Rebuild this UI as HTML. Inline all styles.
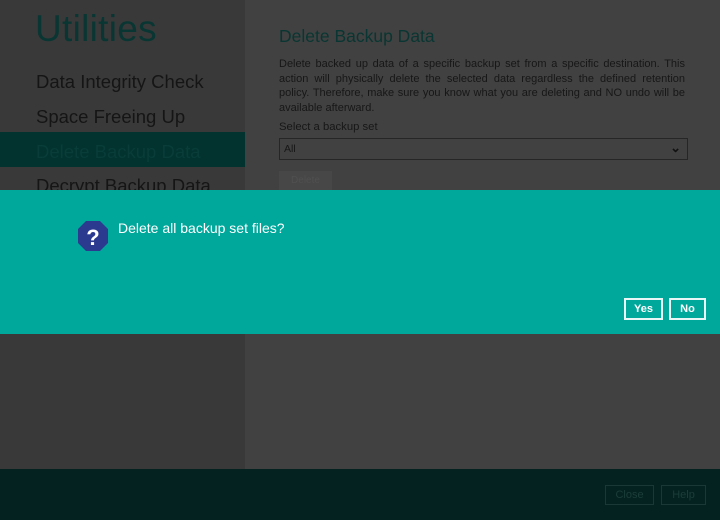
<!DOCTYPE html>
<html><head><style>
*{margin:0;padding:0;box-sizing:border-box}
body{width:720px;height:520px;overflow:hidden;background:#414141;font-family:"Liberation Sans",sans-serif;position:relative}
.side{position:absolute;left:0;top:0;width:245px;height:469px;background:#393939}
.t{position:absolute;left:35px;top:8px;font-size:37px;color:#093632;letter-spacing:0.3px}
.it{position:absolute;left:36px;font-size:18.5px;color:#151515}
.sel{position:absolute;left:0;top:132px;width:245px;height:35px;background:#02332f}
.main{position:absolute;left:279px}
.foot{position:absolute;left:0;top:469px;width:720px;height:51px;background:#032220}
.fb{position:absolute;top:485px;height:20px;border:1px solid #1a3835;color:#1c3e3b;font-size:11px;text-align:center;line-height:18px}
.dlg{position:absolute;left:0;top:190px;width:720px;height:144px;background:#00a89b}
.btn{position:absolute;top:298px;height:22px;border:2px solid #e8f7f5;color:#fff;font-weight:bold;font-size:11px;text-align:center;line-height:18px}
</style></head><body>
<div class="side">
<div class="t">Utilities</div>
<div class="it" style="top:71px">Data Integrity Check</div>
<div class="it" style="top:106px">Space Freeing Up</div>
<div class="sel"></div>
<div class="it" style="top:141px;color:#083d39">Delete Backup Data</div>
<div class="it" style="top:175px">Decrypt Backup Data</div>
</div>
<div class="main" style="top:26px;font-size:17.5px;color:#093632">Delete Backup Data</div>
<div class="main" style="top:57px;width:406px;font-size:11px;line-height:14.5px;color:#171717;text-align:justify">Delete backed up data of a specific backup set from a specific destination. This action will physically delete the selected data regardless the defined retention policy. Therefore, make sure you know what you are deleting and NO undo will be available afterward.</div>
<div class="main" style="top:121px;font-size:11.3px;color:#171717">Select a backup set</div>
<div class="main" style="top:138px;width:409px;height:22px;border:1px solid #262626;font-size:10.5px;color:#171717;padding:4px 4px">All<span style="position:absolute;right:6px;top:1px;font-size:13px;font-weight:bold;color:#111">&#8964;</span></div>
<div class="main" style="top:171px;width:53px;height:19px;background:#474747;font-size:10px;color:#505050;text-align:center;line-height:20px">Delete</div>
<div class="foot"></div>
<div class="fb" style="left:605px;width:49px">Close</div>
<div class="fb" style="left:661px;width:45px">Help</div>
<div class="dlg"></div>
<svg style="position:absolute;left:77px;top:220px" width="32" height="32" viewBox="0 0 32 32"><polygon points="9,1 23,1 31,9 31,23 23,31 9,31 1,23 1,9" fill="#2b3a8f"/><text x="16" y="25" font-size="22" font-weight="bold" fill="#fff" text-anchor="middle" font-family="Liberation Sans">?</text></svg>
<div style="position:absolute;left:118px;top:220px;font-size:14px;color:#fff">Delete all backup set files?</div>
<div class="btn" style="left:624px;width:39px">Yes</div>
<div class="btn" style="left:669px;width:37px">No</div>
</body></html>
